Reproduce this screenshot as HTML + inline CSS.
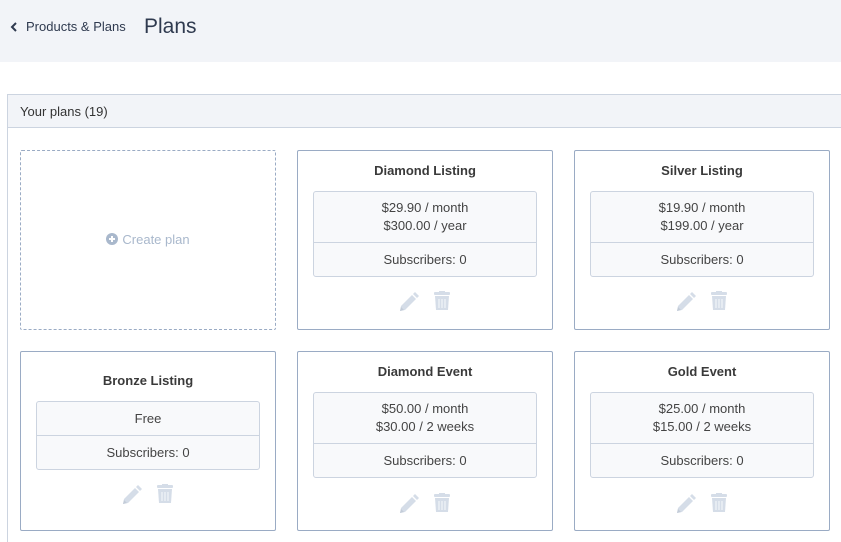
<!DOCTYPE html>
<html><head><meta charset="utf-8"><style>
*{box-sizing:border-box;margin:0;padding:0}
html,body{width:841px;height:542px;overflow:hidden}
body{background:#fff;font-family:"Liberation Sans",Arial,sans-serif;color:#333;position:relative}
.hdr{position:absolute;left:0;top:0;width:841px;height:62px;background:#f2f4f8}
.back{position:absolute;left:10px;top:19px;font-size:13px;color:#2f3a4f}
.title{position:absolute;left:144px;top:15px;font-size:21px;color:#2f3a4f;font-weight:300}
.panel{position:absolute;left:7px;top:94px;width:850px;height:460px;border:1px solid #ccd4e0;}
.ph{height:33px;background:#f2f4f8;border-bottom:1px solid #ccd4e0;font-size:13px;color:#333;padding:9px 0 0 12px}
.card{position:absolute;width:256px;height:180px;border:1px solid #9aabc4;border-radius:2px;background:#fff}
.create{border:1px dashed #9aabc4;color:#a9b8cc;font-size:13px;text-align:center;padding-top:81px}
.ct{text-align:center;font-size:13px;font-weight:bold;color:#3a3a3a;position:absolute;left:0;right:0}
.box{position:absolute;left:15px;right:15px;border:1px solid #ccd4e0;border-radius:3px;background:#f8f9fb;font-size:13px;color:#444;text-align:center}
.box .p{border-bottom:1px solid #ccd4e0;line-height:18px}
.box .s{line-height:33px}
.ic{position:absolute;left:100px;width:56px;height:22px}
</style></head><body>
<div class="hdr">
<div class="back"><svg width="8" height="10" viewBox="0 0 8 10" style="margin-right:8px;vertical-align:-1px"><path d="M6 1L2 5l4 4" stroke="#2f3a4f" stroke-width="2" fill="none"/></svg>Products &amp; Plans</div>
<div class="title">Plans</div>
</div>
<div class="panel"><div class="ph">Your plans (19)</div></div>

<div class="card create" style="left:20px;top:150px"><svg width="12" height="12" viewBox="0 0 12 12" style="vertical-align:-1px;margin-right:4px"><circle cx="6" cy="6" r="6" fill="#a9b8cc"/><path d="M6 3v6M3 6h6" stroke="#fff" stroke-width="2"/></svg>Create plan</div>

<svg width="0" height="0" style="position:absolute"><defs>
<g id="icons"><path d="M2 20l1-5L14 4l4 4L7 19z" fill="#d5dde8"/><path d="M15 3l2-2 4 4-2 2z" fill="#d5dde8"/><path d="M2 20l1-4 3 3z" fill="#c3ccd8"/>
<rect x="36" y="1" width="16" height="3" rx="1" fill="#d5dde8"/><rect x="41" y="0" width="6" height="2" fill="#d5dde8"/><path d="M37 5h14l-1 14h-12z" fill="#d5dde8"/><path d="M41 8v9M44 8v9M47 8v9" stroke="#f2f5f9" stroke-width="1.2"/></g></defs></svg>

<div class="card" style="left:297px;top:150px"><div class="ct" style="top:12px">Diamond Listing</div>
<div class="box" style="top:40px"><div class="p" style="padding:7px 0 7px">$29.90 / month<br>$300.00 / year</div><div class="s">Subscribers: 0</div></div>
<svg class="ic" style="top:140px" viewBox="0 0 56 22"><use href="#icons"/></svg></div>

<div class="card" style="left:574px;top:150px"><div class="ct" style="top:12px">Silver Listing</div>
<div class="box" style="top:40px"><div class="p" style="padding:7px 0 7px">$19.90 / month<br>$199.00 / year</div><div class="s">Subscribers: 0</div></div>
<svg class="ic" style="top:140px" viewBox="0 0 56 22"><use href="#icons"/></svg></div>

<div class="card" style="left:20px;top:351px"><div class="ct" style="top:21px">Bronze Listing</div>
<div class="box" style="top:49px"><div class="p" style="line-height:33px">Free</div><div class="s">Subscribers: 0</div></div>
<svg class="ic" style="top:132px" viewBox="0 0 56 22"><use href="#icons"/></svg></div>

<div class="card" style="left:297px;top:351px"><div class="ct" style="top:12px">Diamond Event</div>
<div class="box" style="top:40px"><div class="p" style="padding:7px 0 7px">$50.00 / month<br>$30.00 / 2 weeks</div><div class="s">Subscribers: 0</div></div>
<svg class="ic" style="top:141px" viewBox="0 0 56 22"><use href="#icons"/></svg></div>

<div class="card" style="left:574px;top:351px"><div class="ct" style="top:12px">Gold Event</div>
<div class="box" style="top:40px"><div class="p" style="padding:7px 0 7px">$25.00 / month<br>$15.00 / 2 weeks</div><div class="s">Subscribers: 0</div></div>
<svg class="ic" style="top:141px" viewBox="0 0 56 22"><use href="#icons"/></svg></div>
</body></html>
